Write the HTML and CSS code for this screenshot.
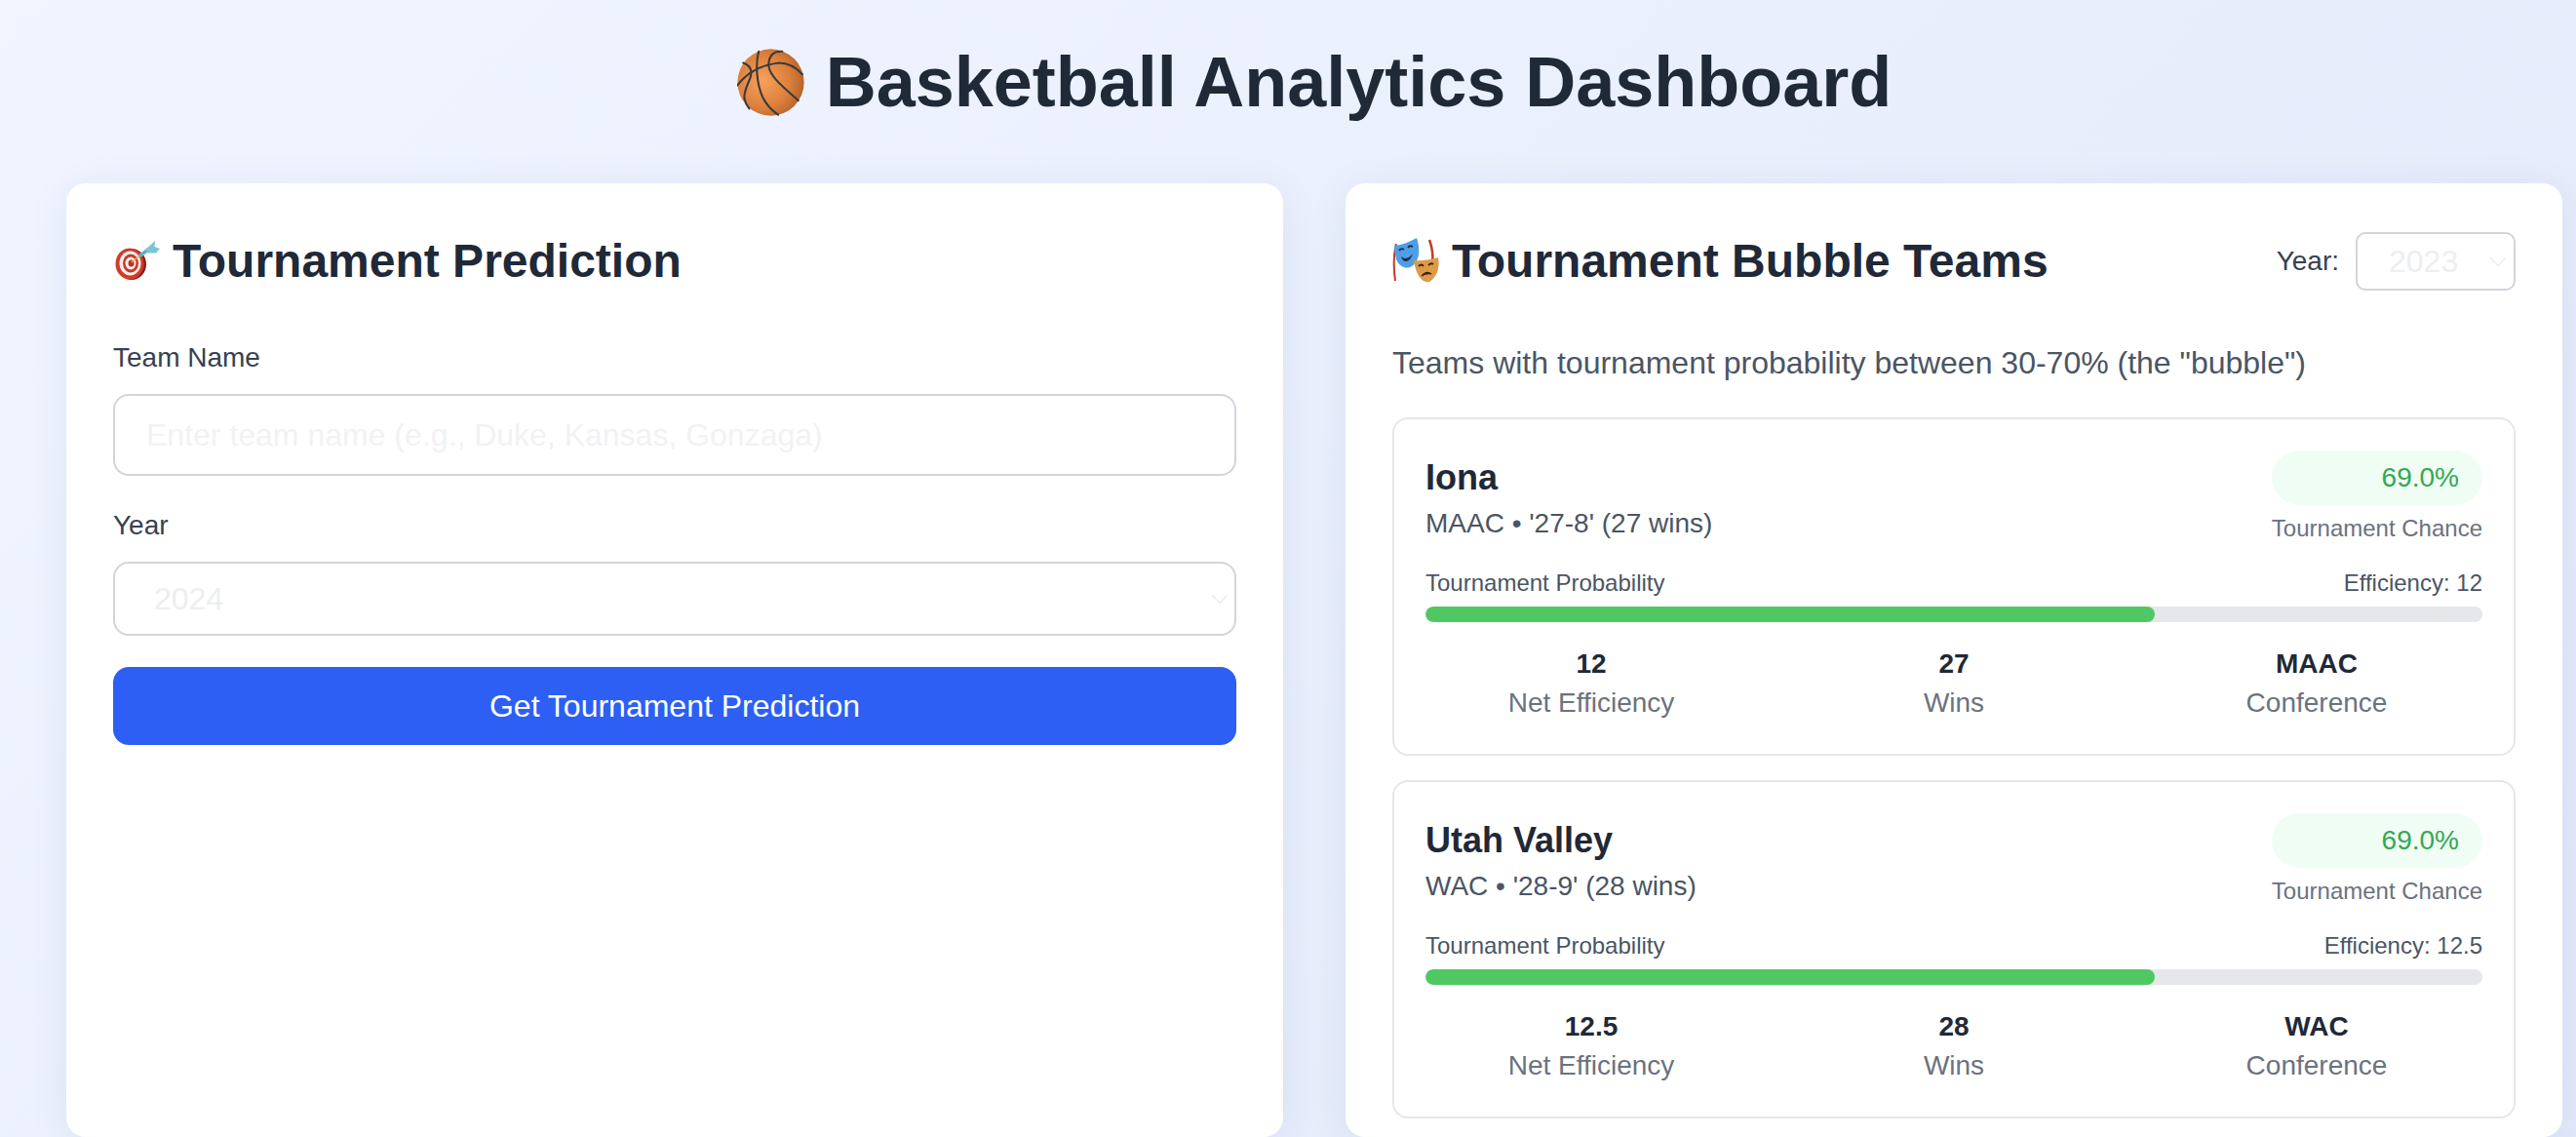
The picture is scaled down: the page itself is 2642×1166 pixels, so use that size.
FILE: index.html
```html
<!DOCTYPE html>
<html lang="en">
<head>
	<meta charset="utf-8"/>
	<title>Basketball Analytics Dashboard</title>
	<link rel="stylesheet" href="styles.css">
</head>
<body>
	<div class="container">
		<h1 class="page-title">
			<svg class="emoji-ball" viewBox="0 0 100 100">
				<defs>
					<radialGradient id="ballFill" cx="38%" cy="48%" r="62%">
						<stop offset="0" stop-color="#f6a25c"/>
						<stop offset="0.65" stop-color="#dc803c"/>
						<stop offset="1" stop-color="#b8642c"/>
					</radialGradient>
				</defs>
				<circle cx="50" cy="50" r="49.5" fill="url(#ballFill)"/>
				<g fill="none" stroke="#3a3a3c" stroke-width="3" stroke-linecap="round">
					<path d="M32 4C27 24 29 52 38 72C44 84 52 92 61 98"/>
					<path d="M67 4C53 3 46 12 47 26C49 42 70 58 91 77"/>
					<path d="M0 55C14 36 36 24 62 21C76 21 88 28 97 38"/>
					<path d="M9 21C18 24 23 30 20 42C15 55 9 66 11 74C12 80 15 85 18 89"/>
				</g>
			</svg>
			Basketball Analytics Dashboard
		</h1>

		<div class="columns">
			<section class="panel">
				<div class="panel-head">
					<h2>
						<svg class="emoji-dart" viewBox="0 0 48 40">
							<ellipse cx="19" cy="24" rx="15" ry="16" fill="#8f1d14"/>
							<ellipse cx="17" cy="23.5" rx="14.5" ry="16" fill="#d23b2b"/>
							<ellipse cx="17.5" cy="23" rx="11" ry="12.5" fill="#f5f0ec"/>
							<ellipse cx="18" cy="23" rx="8" ry="9.5" fill="#cf3527"/>
							<ellipse cx="18" cy="23" rx="5.5" ry="6.5" fill="#f5f0ec"/>
							<ellipse cx="18.5" cy="23" rx="3" ry="3.5" fill="#c62f22"/>
							<path d="M19 22L30 13" stroke="#e2b93f" stroke-width="1.6"/>
							<path d="M28 15L37 8" stroke="#5fb0c0" stroke-width="3.5" stroke-linecap="round"/>
							<path d="M33 9L43 0L42.5 6L48 8L44 12.5L35 12.5Z" fill="#7cc6d4"/>
						</svg>
						Tournament Prediction
					</h2>
				</div>
				<label class="field-label">Team Name</label>
				<input class="text-input" type="text" placeholder="Enter team name (e.g., Duke, Kansas, Gonzaga)"/>
				<label class="field-label field-label-year">Year</label>
				<div class="select-wrap">
					<select class="year-select"><option>2024</option></select>
					<svg class="chevron" viewBox="0 0 18 11"><path d="M1 1L9 9.5L17 1" fill="none" stroke="#eceef0" stroke-width="1.8"/></svg>
				</div>
				<button class="submit-btn" type="button">Get Tournament Prediction</button>
			</section>

			<section class="panel">
				<div class="panel-head">
					<h2>
						<svg class="emoji-masks" viewBox="0 0 48 46">
							<path d="M4 6C1 18 1 30 3 44" fill="none" stroke="#c53a2a" stroke-width="2"/>
							<path d="M38 2C41 10 42 18 41 26" fill="none" stroke="#c53a2a" stroke-width="2.5"/>
							<path d="M2 8C10 7 18 4 25 0C29 12 28 24 20 29C14 33 7 29 4 22C3 17 2 12 2 8Z" fill="#4f9fe6"/>
							<path d="M7 13Q9 10 12 12M16 10Q18 7 21 9" fill="none" stroke="#16304d" stroke-width="1.8"/>
							<path d="M9 19Q15 24 21 16Q18 25 13 24Q10 23 9 19Z" fill="#16304d"/>
							<path d="M22 23C30 24 40 22 47 20C49 30 46 40 38 45C31 47 24 38 22 23Z" fill="#dd9a48"/>
							<path d="M27 29Q30 26 32 29M37 28Q40 25 42 27" fill="none" stroke="#3a2310" stroke-width="1.8"/>
							<path d="M30 39Q35 33 40 37Q35 36 30 39Z" fill="#3a2310" stroke="#3a2310" stroke-width="1.2"/>
						</svg>
						Tournament Bubble Teams
					</h2>
					<div class="year-filter">
						<span>Year:</span>
						<div class="select-wrap select-wrap-small">
							<select class="year-select year-select-small"><option>2023</option></select>
							<svg class="chevron chevron-small" viewBox="0 0 18 11"><path d="M1 1L9 9.5L17 1" fill="none" stroke="#eceef0" stroke-width="1.8"/></svg>
						</div>
					</div>
				</div>
				<p class="intro">Teams with tournament probability between 30-70% (the "bubble")</p>

				<div class="team-card">
					<div class="team-top">
						<div>
							<h3 class="team-name">Iona</h3>
							<div class="team-meta">MAAC • '27-8' (27 wins)</div>
						</div>
						<div class="chance">
							<div class="chance-pill">69.0%</div>
							<div class="chance-label">Tournament Chance</div>
						</div>
					</div>
					<div class="bar-labels"><span>Tournament Probability</span><span>Efficiency: 12</span></div>
					<div class="bar"><div class="bar-fill" style="width: 69%"></div></div>
					<div class="stats">
						<div><div class="stat-value">12</div><div class="stat-label">Net Efficiency</div></div>
						<div><div class="stat-value">27</div><div class="stat-label">Wins</div></div>
						<div><div class="stat-value">MAAC</div><div class="stat-label">Conference</div></div>
					</div>
				</div>

				<div class="team-card">
					<div class="team-top">
						<div>
							<h3 class="team-name">Utah Valley</h3>
							<div class="team-meta">WAC • '28-9' (28 wins)</div>
						</div>
						<div class="chance">
							<div class="chance-pill">69.0%</div>
							<div class="chance-label">Tournament Chance</div>
						</div>
					</div>
					<div class="bar-labels"><span>Tournament Probability</span><span>Efficiency: 12.5</span></div>
					<div class="bar"><div class="bar-fill" style="width: 69%"></div></div>
					<div class="stats">
						<div><div class="stat-value">12.5</div><div class="stat-label">Net Efficiency</div></div>
						<div><div class="stat-value">28</div><div class="stat-label">Wins</div></div>
						<div><div class="stat-value">WAC</div><div class="stat-label">Conference</div></div>
					</div>
				</div>
			</section>
		</div>
	</div>
</body>
</html>
```

FILE: styles.css
```css
* {
	box-sizing: border-box;
}
html, body {
	margin: 0;
	height: 1166px;
	overflow: hidden;
}
body {
	font-family: "Liberation Sans", Arial, sans-serif;
	color: #1f2937;
	background: linear-gradient(135deg, #f0f5ff 0%, #e3e9fa 100%);
}
.container {
	width: 2696px;
	padding: 0 68px;
}
.page-title {
	display: flex;
	align-items: center;
	justify-content: center;
	gap: 22px;
	height: 188px;
	margin: 0;
	padding-bottom: 20px;
	font-size: 72px;
	font-weight: 700;
}
.emoji-ball {
	width: 69px;
	height: 69px;
}
.columns {
	display: grid;
	grid-template-columns: 1248px 1248px;
	gap: 64px;
}
.panel {
	height: 978px;
	padding: 48px;
	background: #fff;
	border-radius: 20px;
	box-shadow: 0 6px 40px rgba(30, 50, 120, .08);
}
.panel-head {
	display: flex;
	align-items: center;
	justify-content: space-between;
	height: 62px;
}
h2 {
	display: flex;
	align-items: center;
	gap: 13px;
	margin: 0;
	font-size: 48px;
	font-weight: 700;
}
.emoji-dart {
	width: 48px;
	height: 40px;
}
.emoji-masks {
	width: 48px;
	height: 46px;
}
.field-label {
	display: block;
	margin-top: 49px;
	font-size: 28px;
	line-height: 40px;
	color: #374151;
}
.text-input {
	display: block;
	width: 100%;
	height: 84px;
	margin-top: 17px;
	padding: 0 32px;
	font-family: inherit;
	font-size: 32px;
	background: #fff;
	border: 2px solid #d1d5db;
	border-radius: 16px;
}
.text-input::placeholder {
	color: #f1f2f4;
	opacity: 1;
}
.field-label-year {
	margin-top: 31px;
}
.select-wrap {
	position: relative;
	margin-top: 17px;
}
.year-select {
	display: block;
	width: 100%;
	height: 76px;
	padding: 0 40px;
	font-family: inherit;
	font-size: 32px;
	color: #eceef0;
	background: #fff;
	border: 2px solid #d1d5db;
	border-radius: 16px;
	appearance: none;
}
.chevron {
	position: absolute;
	top: 33px;
	right: 8px;
	width: 18px;
	height: 11px;
}
.submit-btn {
	display: block;
	width: 100%;
	height: 80px;
	margin-top: 32px;
	font-family: inherit;
	font-size: 32px;
	color: #fff;
	background: #2d5ff4;
	border: 0;
	border-radius: 16px;
}
.year-filter {
	display: flex;
	align-items: center;
	align-self: flex-end;
	gap: 17px;
	font-size: 28px;
	color: #374151;
}
.select-wrap-small {
	width: 164px;
	margin-top: 0;
}
.year-select-small {
	height: 60px;
	padding: 0 32px;
	border-radius: 10px;
}
.chevron-small {
	top: 25px;
	right: 9px;
}
.intro {
	margin: 0;
	padding-top: 52px;
	font-size: 32px;
	line-height: 44px;
	color: #4b5563;
}
.team-card {
	height: 347px;
	margin-top: 34px;
	padding: 32px;
	background: #fff;
	border: 2px solid #e5e7eb;
	border-radius: 16px;
}
.team-card + .team-card {
	margin-top: 25px;
}
.team-top {
	display: flex;
	justify-content: space-between;
}
.team-name {
	margin: 0;
	font-size: 36px;
	line-height: 56px;
	font-weight: 700;
}
.team-meta {
	font-size: 28px;
	line-height: 38px;
	color: #4b5563;
}
.chance {
	text-align: right;
}
.chance-pill {
	height: 56px;
	padding: 0 24px;
	font-size: 28px;
	line-height: 56px;
	color: #34a853;
	background: #f0fdf4;
	border-radius: 28px;
}
.chance-label {
	margin-top: 10px;
	font-size: 24px;
	line-height: 28px;
	color: #6b7280;
}
.bar-labels {
	display: flex;
	justify-content: space-between;
	margin-top: 28px;
	font-size: 24px;
	line-height: 28px;
	color: #4b5563;
}
.bar {
	height: 16px;
	margin-top: 10px;
	background: #e5e7eb;
	border-radius: 8px;
	overflow: hidden;
}
.bar-fill {
	height: 100%;
	background: #4fc864;
	border-radius: 8px;
}
.stats {
	display: grid;
	grid-template-columns: repeat(3, 1fr);
	gap: 32px;
	margin-top: 24px;
	text-align: center;
}
.stat-value {
	font-size: 28px;
	line-height: 38px;
	font-weight: 700;
}
.stat-label {
	font-size: 28px;
	line-height: 42px;
	color: #6b7280;
}
```
